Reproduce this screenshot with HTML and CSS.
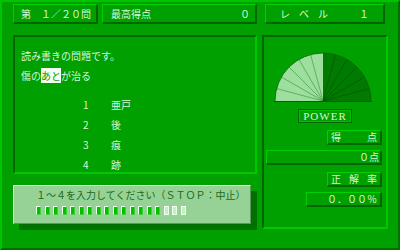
FILE: index.html
```html
<!DOCTYPE html>
<html lang="ja">
<head>
<meta charset="utf-8">
<link rel="stylesheet" href="styles.css">
</head>
<body>
<div class="screen">
  <div class="topbar">
    <div class="raised t1">第　１／２０問</div>
    <div class="raised t2"><span>最高得点</span><span>０</span></div>
    <div class="raised t3"><span>レベル</span><span>１</span></div>
  </div>
  <div class="main">
    <div class="leftcol">
      <div class="inset question">
        <p class="q1">読み書きの問題です。</p>
        <p class="q2">傷の<span class="hl">あと</span>が治る</p>
        <ol class="choices">
          <li><span class="num">1</span><span>亜戸</span></li>
          <li><span class="num">2</span><span>後</span></li>
          <li><span class="num">3</span><span>痕</span></li>
          <li><span class="num">4</span><span>跡</span></li>
        </ol>
      </div>
      <div class="inputbox">
        <div class="prompt">１～４を入力してください（ＳＴＯＰ：中止）</div>
        <div class="blocks">
          <i class="b"></i><i class="b"></i><i class="b"></i><i class="b"></i><i class="b"></i><i class="b"></i><i class="b"></i><i class="b"></i><i class="b"></i><i class="b"></i><i class="b"></i><i class="b"></i><i class="b"></i><i class="b"></i><i class="b"></i><i class="b w"></i><i class="b w"></i><i class="b w"></i>
        </div>
      </div>
    </div>
    <div class="inset side">
      <svg class="gauge" width="100" height="52" viewBox="0 0 100 52">
        <path d="M50 50 L2 50 A48 48 0 0 1 50 2 Z" fill="#9ede9e"/>
        <path d="M50 50 L50 2 A48 48 0 0 1 98 50 Z" fill="#007a00"/>
        <g stroke="#4aa84a" stroke-width="0.8">
          <line x1="50" y1="50" x2="3.64" y2="37.58"/>
          <line x1="50" y1="50" x2="8.43" y2="26"/>
          <line x1="50" y1="50" x2="16.06" y2="16.06"/>
          <line x1="50" y1="50" x2="26" y2="8.43"/>
          <line x1="50" y1="50" x2="37.58" y2="3.64"/>
        </g>
        <g stroke="#005a00" stroke-width="0.8">
          <line x1="50" y1="50" x2="96.36" y2="37.58"/>
          <line x1="50" y1="50" x2="91.57" y2="26"/>
          <line x1="50" y1="50" x2="83.94" y2="16.06"/>
          <line x1="50" y1="50" x2="74" y2="8.43"/>
          <line x1="50" y1="50" x2="62.42" y2="3.64"/>
        </g>
        <path d="M2 50 A48 48 0 0 1 98 50" fill="none" stroke="#006600" stroke-width="0.8"/>
        <line x1="1" y1="50.5" x2="99" y2="50.5" stroke="#006600" stroke-width="1.2"/>
      </svg>
      <div class="power">POWER</div>
      <div class="raised lbl"><span>得</span><span>点</span></div>
      <div class="raised val wide">０点</div>
      <div class="raised lbl"><span>正</span><span>解</span><span>率</span></div>
      <div class="raised val mid">０．００％</div>
    </div>
  </div>
</div>
</body>
</html>
```
FILE: styles.css
```css
* { box-sizing: border-box; }
html, body { margin: 0; padding: 0; }
body {
  width: 400px;
  height: 250px;
  background: #00a000;
  font-family: "Noto Sans CJK JP", "DejaVu Sans", sans-serif;
  color: #d8f8d8;
  font-size: 10px;
  overflow: hidden;
}
.screen {
  width: 400px;
  height: 250px;
  border-top: 2px solid #00c400;
  border-left: 2px solid #00c400;
  border-right: 2px solid #007000;
  border-bottom: 2px solid #007000;
  padding: 2px 0 0 11px;
}
.raised {
  border-top: 1px solid #00d000;
  border-left: 1px solid #00d000;
  border-right: 2px solid #006600;
  border-bottom: 2px solid #006600;
  display: flex;
  align-items: center;
  line-height: 1;
  white-space: nowrap;
}
.topbar {
  display: flex;
  height: 20px;
}
.t1 { width: 85px; padding-left: 7px; }
.t2 { width: 155px; margin-left: 4px; padding: 0 5px 0 8px; justify-content: space-between; }
.t3 { width: 120px; margin-left: 8px; padding: 0 14px 0 14px; justify-content: space-between; }
.t3 span:first-child { letter-spacing: 9px; }
.main {
  display: flex;
  margin-top: 11px;
}
.leftcol { width: 244px; }
.inset {
  border-top: 2px solid #006600;
  border-left: 2px solid #006600;
  border-right: 2px solid #00c800;
  border-bottom: 2px solid #00c800;
}
.question {
  height: 139px;
  padding: 9px 0 0 6px;
}
.question p { margin: 0; line-height: 20px; height: 20px; }
.hl { background: #f4fff4; color: #00a000; }
.choices {
  list-style: none;
  margin: 9px 0 0 0;
  padding: 0 0 0 62px;
}
.choices li {
  display: flex;
  height: 20px;
  line-height: 20px;
}
.num { width: 28px; }
.inputbox {
  position: relative;
  margin-top: 11px;
  width: 238px;
  height: 39px;
  background: #96d296;
  border-top: 1px solid #d8f4d8;
  border-left: 1px solid #d8f4d8;
  border-right: 1px solid #5a9a5a;
  border-bottom: 1px solid #5a9a5a;
  box-shadow: 6px 6px 0 #007000;
  padding: 3px 0 0 22px;
  color: #1c6a1c;
}
.prompt { line-height: 12px; height: 12px; }
.blocks {
  display: flex;
  gap: 3.5px;
  margin-top: 5px;
}
.b {
  display: block;
  width: 5px;
  height: 9px;
  background: #00c000;
  border-left: 1px solid #f0fff0;
  border-top: 1px solid #f0fff0;
  border-right: 1px solid #40d040;
  border-bottom: 1px solid #40d040;
}
.b.w {
  background: #c8ecc8;
  border-left: 1px solid #ffffff;
  border-top: 1px solid #ffffff;
  border-right: 1px solid #e8ffe8;
  border-bottom: 1px solid #e8ffe8;
}
.side {
  width: 126px;
  height: 194px;
  margin-left: 5px;
  display: flex;
  flex-direction: column;
  align-items: flex-end;
  padding: 14px 4px 0 0;
}
.gauge { display: block; align-self: flex-start; margin-left: 9px; }
.power {
  align-self: flex-start;
  margin: 6px 0 0 34px;
  width: 54px;
  height: 14px;
  border: 1px solid #006600;
  outline: 1px solid #00c000;
  outline-offset: -2px;
  font-family: "Liberation Serif", "DejaVu Serif", serif;
  font-size: 11px;
  letter-spacing: 1px;
  line-height: 12px;
  text-align: center;
}
.lbl {
  width: 55px;
  height: 15px;
  padding: 0 3px 0 3px;
  margin-top: 7px;
  justify-content: space-between;
}
.val {
  height: 15px;
  margin-top: 5px;
  justify-content: flex-end;
  padding-right: 1px;
}
.wide { width: 116px; }
.mid { width: 76px; padding-right: 3px; }
```
